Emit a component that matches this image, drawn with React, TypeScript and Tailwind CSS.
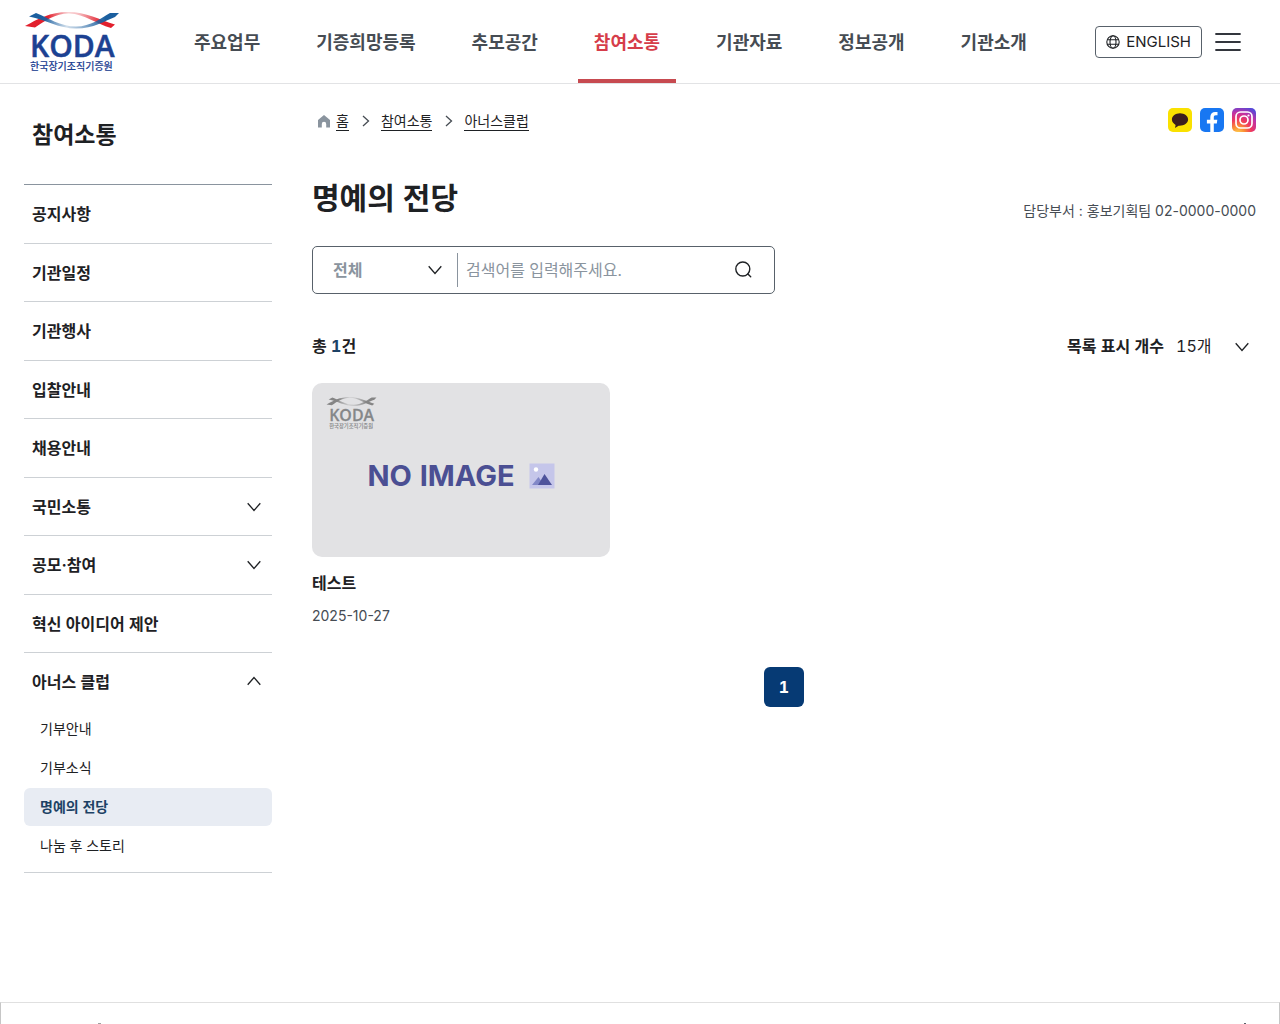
import clsx from "clsx";

const NAV = ["주요업무", "기증희망등록", "추모공간", "참여소통", "기관자료", "정보공개", "기관소개"];

const SIDE = [
  { label: "공지사항" },
  { label: "기관일정" },
  { label: "기관행사" },
  { label: "입찰안내" },
  { label: "채용안내" },
  { label: "국민소통", toggle: true },
  { label: "공모·참여", toggle: true },
  { label: "혁신 아이디어 제안" },
];

const SUB = ["기부안내", "기부소식", "명예의 전당", "나눔 후 스토리"];

const CRUMBS = ["홈", "참여소통", "아너스클럽"];

function Chevron({ className }: { className?: string }) {
  return (
    <svg viewBox="0 0 14 10" className={clsx("w-3.5 h-2.5", className)} fill="none" stroke="currentColor" strokeWidth="1.300" aria-hidden="true">
      <path d="M0.7 1.2 7 8.4 13.3 1.2" />
    </svg>
  );
}

function Logo({ className, mono }: { className?: string; mono?: boolean }) {
  const id = mono ? "mono" : "color";
  const red = mono ? "#858585" : "#e2202d";
  const blue = mono ? "#858585" : "#1b5f9f";
  const text = mono ? "#858789" : "#1c4192";
  return (
    <svg viewBox="0 0 96 64" className={className} role="img" aria-label="KODA 한국장기조직기증원">
      <defs>
        <linearGradient id={`${id}-red`} x1="0" x2="1">
          <stop offset="0" stopColor={red} />
          <stop offset="0.25" stopColor={red} />
          <stop offset="0.48" stopColor={red} stopOpacity="0.2" />
          <stop offset="0.6" stopColor={red} stopOpacity="0.3" />
          <stop offset="0.85" stopColor={red} />
        </linearGradient>
        <linearGradient id={`${id}-blue`} x1="0" x2="1">
          <stop offset="0" stopColor={blue} />
          <stop offset="0.15" stopColor={blue} />
          <stop offset="0.42" stopColor={blue} stopOpacity="0.2" />
          <stop offset="0.6" stopColor={blue} stopOpacity="0.5" />
          <stop offset="0.85" stopColor={blue} />
        </linearGradient>
      </defs>
      <path d="M1 16C14 9 26 2 44 2 62 2 76 10 91 14.500L87 18C72 14 61 4 45 3.500 31 3.500 21 11 11 17.500Z" fill={`url(#${id}-red)`} />
      <path d="M12 3C25 8 36 16.500 52 16.500 67 16.500 77 8 86 3L95 3 91 7C80 11 70 18.500 52 18.500 35 18.500 22 10 5 6.500Z" fill={`url(#${id}-blue)`} />
      <text x="6" y="47" fontSize="30" fontWeight="600" fill={text} stroke={text} strokeWidth="0.500" className="font-['Open_Sans',sans-serif]">
        KODA
      </text>
      <text x="6" y="60" fontSize="10" fontWeight="500" fill={text} stroke={text} strokeWidth="0.100" className="font-['Noto_Sans_CJK_KR',sans-serif]">
        한국장기조직기증원
      </text>
    </svg>
  );
}

function Header() {
  return (
    <header className="flex h-[84px] items-stretch border-b border-[#e2e3e5] pl-6 pr-[38px]">
      <a href="#" className="mt-2.5 shrink-0">
        <Logo className="w-24 h-16" />
      </a>
      <nav className="ml-[58px] flex gap-6">
        {NAV.map((label) => (
          <a
            key={label}
            href="#"
            className={clsx(
              "flex items-center whitespace-nowrap border-b-4 px-4 pt-1.5 text-lg font-bold",
              label === "참여소통" ? "border-[#c74a50] text-[#d63d4a]" : "border-transparent text-[#464c53]",
            )}
          >
            {label}
          </a>
        ))}
      </nav>
      <div className="ml-auto flex items-center gap-3">
        <button type="button" className="flex h-8 items-center gap-1.5 rounded border border-[#58616a] px-2.5 pt-px text-[15px] text-[#1e2124]">
          <svg viewBox="0 0 14 14" className="size-3.5" fill="none" stroke="currentColor" strokeWidth="1.100" aria-hidden="true">
            <circle cx="7" cy="7" r="6.200" />
            <ellipse cx="7" cy="7" rx="3" ry="6.200" />
            <path d="M1.300 4.800h11.400M1.300 9.200h11.400" />
          </svg>
          ENGLISH
        </button>
        <button type="button" aria-label="전체메뉴">
          <svg viewBox="0 0 28 20" className="w-7 h-5" fill="none" stroke="#33363d" strokeWidth="1.800" strokeLinecap="round">
            <path d="M2 2h24M2 10h24M2 18h24" />
          </svg>
        </button>
      </div>
    </header>
  );
}

function Sidebar() {
  return (
    <aside className="w-[248px] shrink-0 text-[#1e2124]">
      <h2 className="flex h-[101px] items-center border-b border-[#8a949e] pl-2 pt-0.5 text-[23px] font-bold">참여소통</h2>
      <ul className="font-bold">
        {SIDE.map((item) => (
          <li key={item.label} className="h-[58px] border-b border-[#cdd1d5] odd:h-[59px]">
            {item.toggle ? (
              <button type="button" className="flex h-full w-full items-center justify-between pl-2 pr-[11px]">
                {item.label}
                <Chevron />
              </button>
            ) : (
              <a href="#" className="flex h-full items-center pl-2">
                {item.label}
              </a>
            )}
          </li>
        ))}
        <li className="border-b border-[#cdd1d5] pb-[7px]">
          <button type="button" className="flex h-[57px] w-full items-center justify-between pl-2 pr-[11px]">
            아너스 클럽
            <Chevron className="mb-0.5 rotate-180" />
          </button>
          <ul className="flex flex-col gap-px text-sm font-normal">
            {SUB.map((label) => (
              <li key={label}>
                <a
                  href="#"
                  className={clsx(
                    "flex h-[38px] items-center rounded-md pl-4",
                    label === "명예의 전당" && "bg-[#e8ecf3] font-bold text-[#1d4265]",
                  )}
                >
                  {label}
                </a>
              </li>
            ))}
          </ul>
        </li>
      </ul>
    </aside>
  );
}

function Breadcrumb() {
  return (
    <nav aria-label="breadcrumb" className="flex items-center pl-[5px] pt-0.5 text-sm text-[#1e2124]">
      <svg viewBox="0 0 14 14" className="mr-[5px] size-3.5" fill="#8a949e" aria-hidden="true">
        <path d="M7 1 1 6v7.500h3.800V10a2.200 2.200 0 0 1 4.400 0v3.500H13V6Z" />
      </svg>
      {CRUMBS.map((label, i) => (
        <span key={label} className="flex items-center">
          {i > 0 && (
            <svg viewBox="0 0 32 12" className="w-8 h-3" fill="none" stroke="#464c53" strokeWidth="1.300" aria-hidden="true">
              <path d="M14 1 19.500 6 14 11" />
            </svg>
          )}
          <a href="#" className="border-b border-[#1e2124] leading-[19px]">
            {label}
          </a>
        </span>
      ))}
    </nav>
  );
}

function Social() {
  return (
    <div className="flex gap-2">
      <a href="#" aria-label="카카오톡">
        <svg viewBox="0 0 24 24" className="size-6">
          <rect width="24" height="24" rx="5" fill="#fae100" />
          <path d="M12 5.200c-4.500 0-8.100 2.800-8.100 6.300 0 2.300 1.500 4.200 3.700 5.400L7 20l3.600-2.300c4.900.4 9.500-2.300 9.500-6.200 0-3.500-3.600-6.300-8.100-6.300Z" fill="#3b1e1e" />
        </svg>
      </a>
      <a href="#" aria-label="페이스북">
        <svg viewBox="0 0 24 24" className="size-6">
          <rect width="24" height="24" rx="5" fill="#1877f2" />
          <path d="M10.300 24v-8.600H6.900v-3.700h3.400V9.100c0-3.400 2-5.200 5-5.200 1.100 0 2.200.2 2.200.2v3.200h-1.600c-1.600 0-2.100.9-2.100 2v2.400h3.500l-.5 3.700h-3V24Z" fill="#fff" />
        </svg>
      </a>
      <a href="#" aria-label="인스타그램">
        <svg viewBox="0 0 24 24" className="size-6">
          <defs>
            <radialGradient id="insta" cx="0.25" cy="1.050" r="1.150">
              <stop offset="0" stopColor="#fed14f" />
              <stop offset="0.25" stopColor="#fb8b35" />
              <stop offset="0.5" stopColor="#ee3660" />
              <stop offset="0.75" stopColor="#c032a5" />
              <stop offset="1" stopColor="#5648d8" />
            </radialGradient>
          </defs>
          <rect width="24" height="24" rx="5" fill="url(#insta)" />
          <g fill="none" stroke="#fff" strokeWidth="1.700">
            <rect x="4" y="4" width="16" height="16" rx="4.500" />
            <circle cx="12" cy="12" r="4" />
          </g>
          <circle cx="16.500" cy="7.500" r="1.100" fill="#fff" />
        </svg>
      </a>
    </div>
  );
}

function SearchForm() {
  return (
    <form className="mt-[26px] flex h-12 w-[463px] max-w-full items-center rounded-[5px] border border-[#58616a]" onSubmit={(e) => e.preventDefault()}>
      <div className="relative h-[34px] w-[145px] shrink-0 border-r border-[#8a949e]">
        <select aria-label="검색 구분" className="h-full w-full appearance-none bg-transparent pl-5 font-bold text-[#8a949e] outline-none">
          <option>전체</option>
        </select>
        <Chevron className="pointer-events-none absolute right-[15px] top-3 text-[#1e2124]" />
      </div>
      <input
        type="text"
        aria-label="검색어"
        placeholder="검색어를 입력해주세요."
        className="min-w-0 flex-1 bg-transparent px-2 outline-none placeholder:text-[#8a949e]"
      />
      <button type="submit" aria-label="검색" className="mr-[22px]">
        <svg viewBox="0 0 18 18" className="size-[18px]" fill="none" stroke="#1e2124" strokeWidth="1.400" strokeLinecap="round">
          <circle cx="8.800" cy="8" r="7" />
          <path d="m13.900 13 2.800 2.800" />
        </svg>
      </button>
    </form>
  );
}

function Card() {
  return (
    <a href="#" className="block">
      <div className="relative flex aspect-[298/174] items-center justify-center gap-3.5 rounded-[10px] bg-[#e2e2e4] pt-3">
        <Logo mono className="absolute left-3.5 top-[13px] h-[34px] w-[51px]" />
        <span className="text-[29px] font-bold text-[#4b4f93]">NO IMAGE</span>
        <svg viewBox="0 0 26 26" className="size-[26px]" aria-hidden="true">
          <rect x="0.500" y="0.500" width="25" height="25" fill="#c5c6ea" />
          <circle cx="7" cy="6.500" r="2.200" fill="#fff" />
          <path d="M3 22 9.500 14 15 22Z" fill="#8187c7" />
          <path d="M9 22 15.500 11 23 22Z" fill="#4e539c" />
        </svg>
      </div>
      <p className="mt-3 font-bold leading-7 text-[#1e2124]">테스트</p>
      <p className="mt-[7px] text-sm leading-6 text-[#464c53] normal-nums">2025-10-27</p>
    </a>
  );
}

export default function App() {
  return (
    <div className="flex min-h-screen flex-col bg-white font-['Inter','Noto_Sans_CJK_KR',sans-serif] text-base tabular-nums">
      <Header />
      <div className="flex flex-1 gap-10 px-6">
        <Sidebar />
        <main className="min-w-0 flex-1 pt-6 text-[#1e2124]">
          <div className="flex items-center justify-between">
            <Breadcrumb />
            <Social />
          </div>
          <div className="mt-11 flex items-end justify-between">
            <h1 className="text-[30px] font-bold leading-[44px]">명예의 전당</h1>
            <p className="text-sm leading-[18px] text-[#464c53] normal-nums">담당부서 : 홍보기획팀 02-0000-0000</p>
          </div>
          <SearchForm />
          <div className="mt-10 flex items-center justify-between leading-6">
            <p className="font-bold">
              총 <span className="text-[#1d4265]">1</span>건
            </p>
            <div className="flex items-center">
              <label htmlFor="page-size" className="font-bold">
                목록 표시 개수
              </label>
              <div className="relative ml-3">
                <select id="page-size" className="w-20 appearance-none bg-transparent outline-none">
                  <option>15개</option>
                </select>
                <Chevron className="pointer-events-none absolute right-[7px] top-2" />
              </div>
            </div>
          </div>
          <div className="mt-[25px] grid grid-cols-3 gap-[25px]">
            <Card />
          </div>
          <div className="mt-[39px] flex justify-center">
            <button type="button" aria-current="page" className="size-10 rounded-md bg-[#063a74] font-bold text-white">
              1
            </button>
          </div>
        </main>
      </div>
      <footer className="flex h-[22px] items-end justify-between border-x border-t border-x-[#c6c6c6] border-t-[#e0e0e0] pl-[97px] pr-[33px]">
        <span className="h-px w-[3px] bg-[#a0a0a0]" />
        <span className="h-px w-0.5 bg-[#58616a]" />
      </footer>
    </div>
  );
}
